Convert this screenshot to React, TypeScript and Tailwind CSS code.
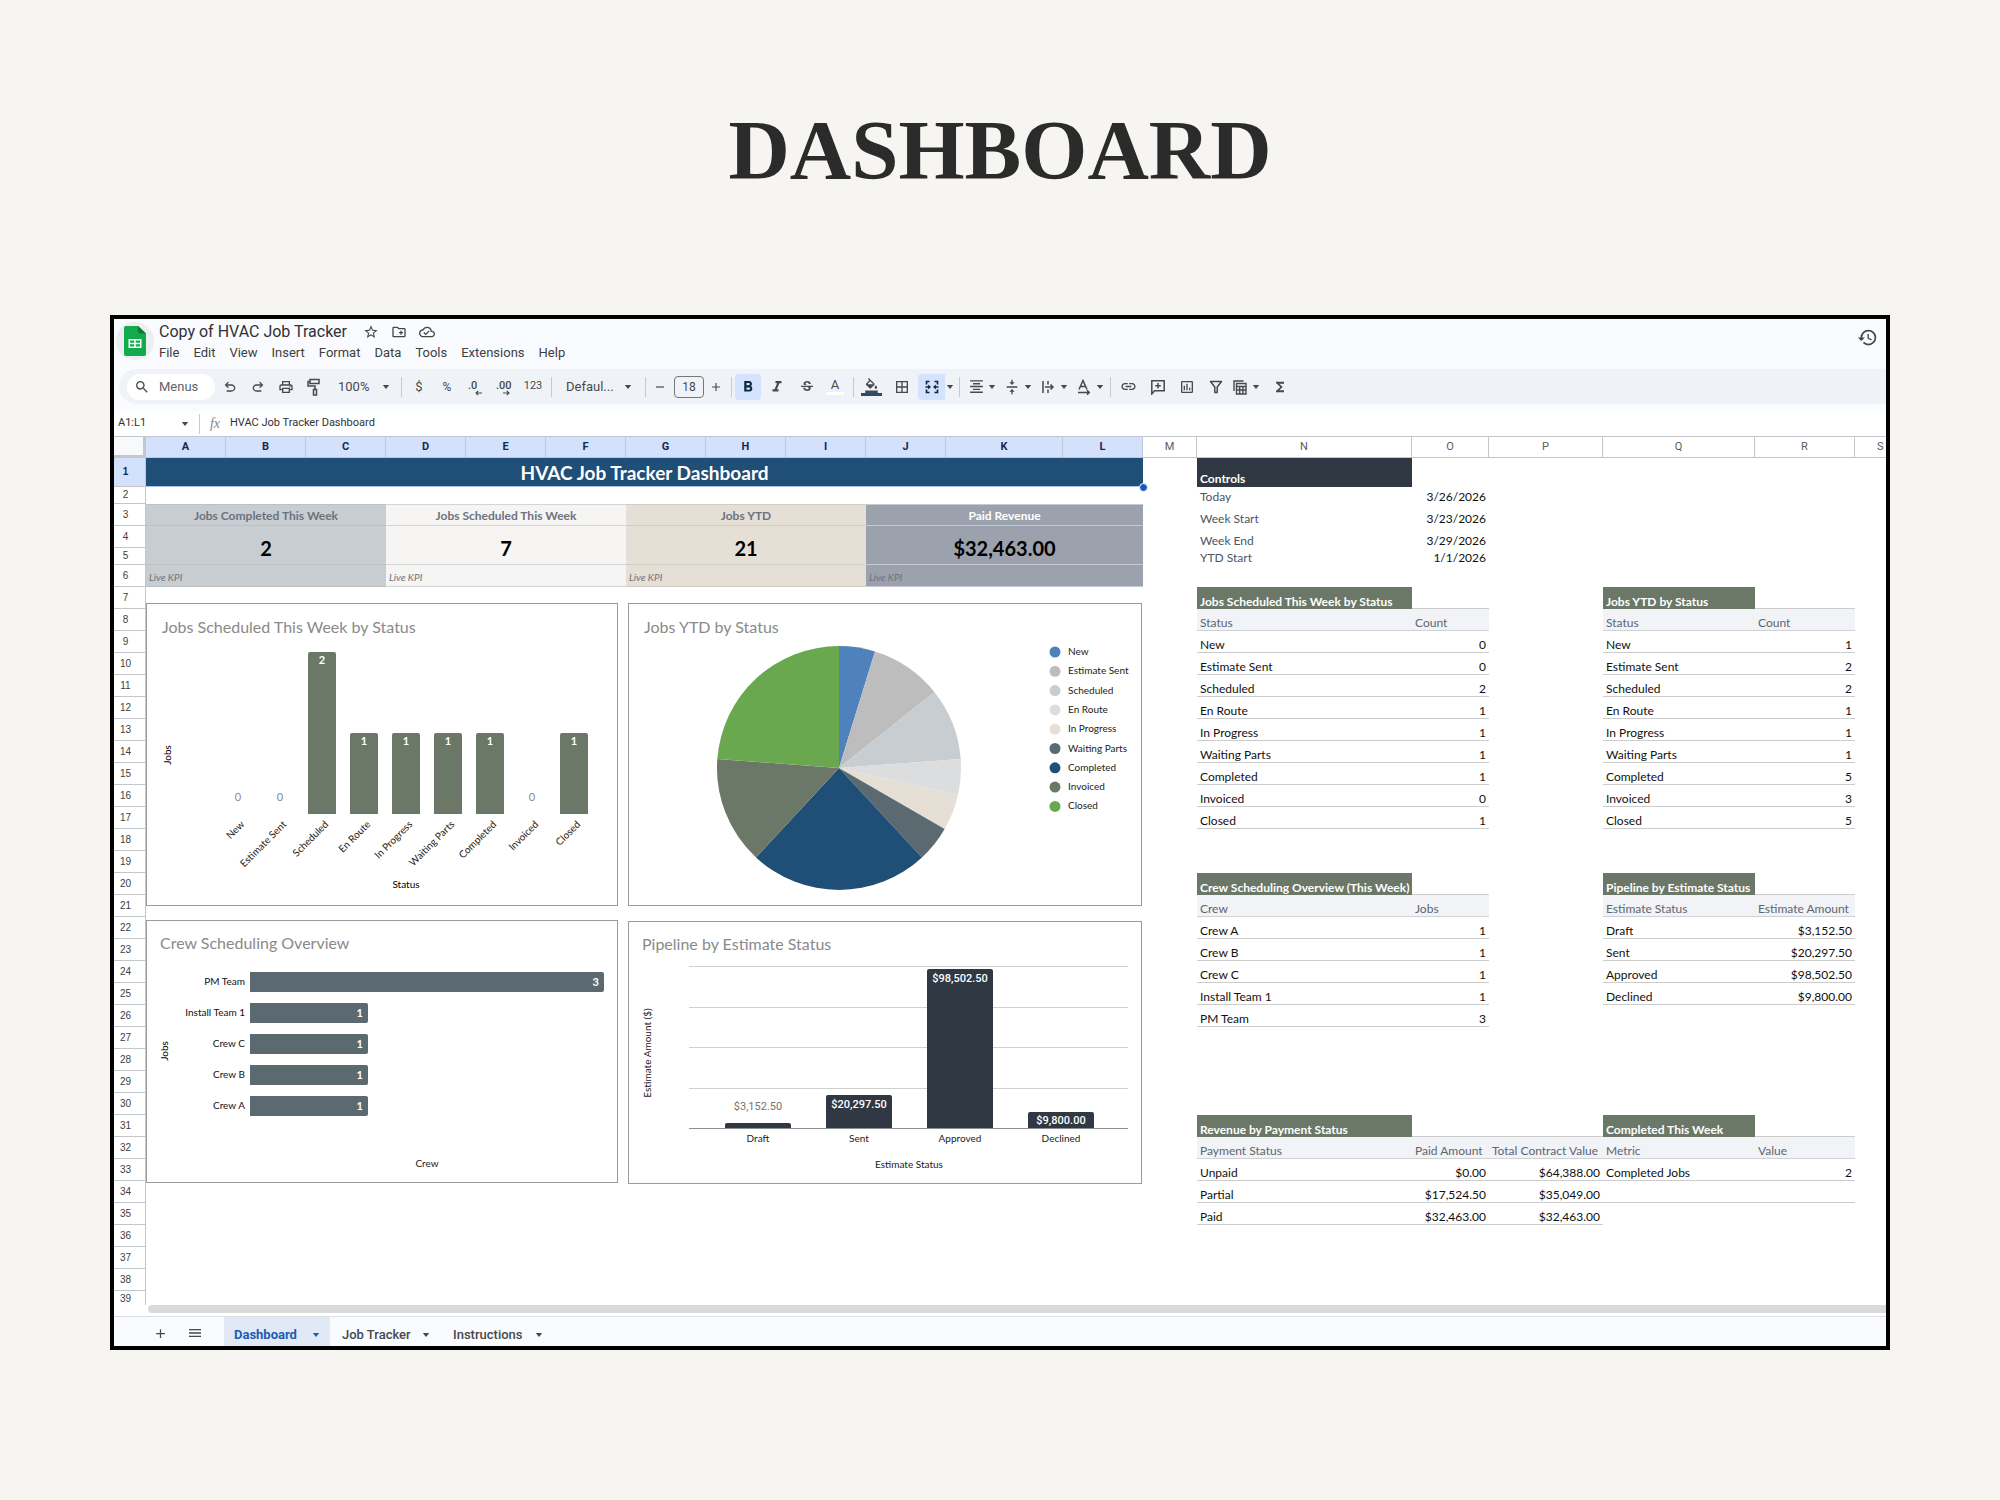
import React from "react";
import {
  MdAdd,
  MdRemove,
  MdBorderAll,
  MdFormatAlignCenter,
  MdFormatBold,
  MdFormatItalic,
  MdFunctions,
  MdHistory,
  MdLink,
  MdMenu,
  MdOutlineCloudDone,
  MdOutlineCreateNewFolder,
  MdOutlineInsertChart,
  MdOutlinePrint,
  MdSearch,
  MdStarBorder,
  MdStrikethroughS,
  MdVerticalAlignCenter,
  MdFormatColorFill,
} from "react-icons/md";

/* ---------- toolbar ---------- */

function Divider({ className = "" }: { className?: string }) {
  return <span className={`h-5 w-px shrink-0 bg-[#c7c9cc] ${className}`} />;
}

function Tool({
  label,
  className = "w-7",
  children,
}: {
  label: string;
  className?: string;
  children: React.ReactNode;
}) {
  return (
    <button
      type="button"
      aria-label={label}
      className={`flex h-[26px] shrink-0 items-center justify-center ${className}`}
    >
      {children}
    </button>
  );
}

function PairTool({ label, children }: { label: string; children: React.ReactNode }) {
  return (
    <button type="button" aria-label={label} className="flex h-[26px] shrink-0 items-center">
      <span className="flex w-5 justify-center">{children}</span>
      <Caret />
    </button>
  );
}

function Caret() {
  return (
    <svg viewBox="0 0 12 12" className="size-3 shrink-0" aria-hidden="true">
      <path d="M2.8 4h6.4L6 8z" fill="currentColor" />
    </svg>
  );
}

function UndoIcon({ className = "" }: { className?: string }) {
  return (
    <svg viewBox="0 -960 960 960" className={`size-4 ${className}`} fill="currentColor" aria-hidden="true">
      <path d="M280-200v-80h284q63 0 109.500-40T720-420q0-60-46.500-100T564-560H312l104 104-56 56-200-200 200-200 56 56-104 104h252q97 0 169.500 63T800-420q0 94-72.500 157T564-200H280Z" />
    </svg>
  );
}

function PaintIcon() {
  return (
    <svg viewBox="0 0 16 18" className="h-[18px] w-4" fill="none" stroke="currentColor" strokeWidth="1.500" aria-hidden="true">
      <path d="M4 1.500h9v4H4zM4 3.500H2v4.500h7V11M7.500 11.500h3V17h-3z" />
    </svg>
  );
}

function DecimalIcon({ more = false }: { more?: boolean }) {
  return (
    <svg viewBox="0 0 22 20" className="h-5 w-[22px]" aria-hidden="true">
      <text x="4" y="12" fontSize="11" fontWeight="500" fontFamily="Roboto, sans-serif" fill="currentColor">
        {more ? ".00" : ".0"}
      </text>
      {more ? (
        <path d="M11 16h6M14.800 13.800l2.200 2.200-2.200 2.200" fill="none" stroke="currentColor" strokeWidth="1.200" />
      ) : (
        <path d="M18 16h-6M14.200 13.800L12 16l2.200 2.200" fill="none" stroke="currentColor" strokeWidth="1.200" />
      )}
    </svg>
  );
}

function MergeIcon() {
  return (
    <svg viewBox="0 0 16 16" className="size-4" aria-hidden="true">
      <path d="M5.500 2.500H2.500v3M5.500 13.500H2.500v-3M10.500 2.500h3v3M10.500 13.500h3v-3M1.500 8H5M14.500 8H11" fill="none" stroke="currentColor" strokeWidth="1.600" />
      <path d="M4.200 5.500L7 8l-2.800 2.500zM11.800 5.500L9 8l2.800 2.500z" fill="currentColor" />
    </svg>
  );
}

function CommentIcon() {
  return (
    <svg viewBox="0 0 16 16" className="size-4" fill="none" stroke="currentColor" strokeWidth="1.500" aria-hidden="true">
      <path d="M1.800 15V1.800h12.400v10H4.500zM8 4v5.600M5.200 6.800h5.600" />
    </svg>
  );
}

function FilterIcon() {
  return (
    <svg viewBox="0 0 16 16" className="size-4" fill="none" stroke="currentColor" strokeWidth="1.500" strokeLinejoin="round" aria-hidden="true">
      <path d="M2.500 2.500h11L9.200 8v5.500H6.800V8z" />
    </svg>
  );
}

function WrapIcon() {
  return (
    <svg viewBox="0 0 16 16" className="size-4" fill="none" stroke="currentColor" strokeWidth="1.500" aria-hidden="true">
      <path d="M3 2v12M8 2v3.500M8 10.500V14M5 8h8M10.500 5.500L13 8l-2.500 2.500" />
    </svg>
  );
}

function RotateTextIcon() {
  return (
    <svg viewBox="0 0 16 16" className="size-4" fill="none" stroke="currentColor" strokeWidth="1.500" aria-hidden="true">
      <path d="M3 10.500L7 1.500l4 9M4.300 7.500h5.400M2 13.500h11M11 11.300l2.200 2.200L11 15.700" />
    </svg>
  );
}

function TableViewIcon() {
  return (
    <svg viewBox="0 0 16 16" className="size-4" fill="none" stroke="currentColor" strokeWidth="1.400" aria-hidden="true">
      <path d="M2 12V2h9.500M4.500 4.500H14V15H4.500zM4.500 7.500H14M4.500 11H14M7.700 7.500V15M10.900 7.500V15" />
    </svg>
  );
}

function SheetsLogo() {
  return (
    <span className="flex size-[38px] items-center justify-center rounded-full bg-[#eceef1]">
      <svg viewBox="0 0 22 30" className="h-[30px] w-[22px]" aria-label="Sheets">
        <path d="M2 0h12l8 7.500V28a2 2 0 0 1-2 2H2a2 2 0 0 1-2-2V2a2 2 0 0 1 2-2z" fill="#12ab4b" />
        <path d="M14 0l8 7.500h-6a2 2 0 0 1-2-2z" fill="#0b7a37" />
        <path d="M4.500 13h13v9h-13zM6 14.500v2.200h4.200v-2.200zM11.700 14.500v2.200H16v-2.200zM6 18.300v2.200h4.200v-2.200zM11.700 18.300v2.200H16v-2.200z" fill="#fff" fillRule="evenodd" />
      </svg>
    </span>
  );
}

const menus = ["File", "Edit", "View", "Insert", "Format", "Data", "Tools", "Extensions", "Help"];

function TopBar() {
  return (
    <header className="flex h-[50px] items-start justify-between pr-2">
      <div className="flex">
        <div className="pl-[2px] pt-[3px]">
          <SheetsLogo />
        </div>
        <div className="pl-[5px] pt-[3px]">
          <div className="flex h-5 items-center text-[#444746]">
            <h2 className="pr-4 text-[16px] leading-5 text-[#303236]">Copy of HVAC Job Tracker</h2>
            <div className="flex items-center gap-3">
              <button type="button" aria-label="Star"><MdStarBorder className="size-4" /></button>
              <button type="button" aria-label="Move"><MdOutlineCreateNewFolder className="size-4" /></button>
              <button type="button" aria-label="Saved to Drive"><MdOutlineCloudDone className="size-4" /></button>
            </div>
          </div>
          <nav className="flex gap-[14px] text-[13px] leading-[22px] text-[#3c3f43]">
            {menus.map((m) => (
              <button key={m} type="button">{m}</button>
            ))}
          </nav>
        </div>
      </div>
      <button type="button" aria-label="Version history" className="pt-2 text-[#444746]">
        <MdHistory className="size-[21px]" />
      </button>
    </header>
  );
}

function Toolbar() {
  return (
    <div className="pb-[7px] pl-[5px]">
      <div className="flex h-[35px] items-center rounded-l-[18px] bg-[#eff3f8] pl-2 text-[#46494d]">
        <label className="flex h-[26px] w-[88px] shrink-0 items-center rounded-full bg-white pl-[7px]">
          <MdSearch className="size-4 shrink-0" />
          <input aria-label="Menus" placeholder="Menus" className="w-14 bg-transparent pl-[9px] text-[13px] outline-none placeholder:text-[#5f6368]" />
        </label>
        <div className="ml-px flex">
          <Tool label="Undo"><UndoIcon /></Tool>
          <Tool label="Redo"><UndoIcon className="-scale-x-100" /></Tool>
          <Tool label="Print"><MdOutlinePrint className="size-4" /></Tool>
          <Tool label="Paint format"><PaintIcon /></Tool>
        </div>
        <label className="flex w-[66px] shrink-0 items-center pl-[10px] text-[13px]">
          <select aria-label="Zoom" className="w-[42px] appearance-none bg-transparent outline-none">
            <option>100%</option>
          </select>
          <Caret />
        </label>
        <Divider className="ml-[7px] mr-[3px]" />
        <Tool label="Format as currency"><span className="text-[13px]">$</span></Tool>
        <Tool label="Format as percent"><span className="text-[12px]">%</span></Tool>
        <Tool label="Decrease decimal places"><DecimalIcon /></Tool>
        <Tool label="Increase decimal places"><DecimalIcon more /></Tool>
        <Tool label="More formats" className="ml-[2px] w-7"><span className="text-[11px]">123</span></Tool>
        <Divider className="ml-1" />
        <label className="flex w-[86px] shrink-0 items-center pl-[14px] text-[13px]">
          <select aria-label="Font" className="w-[56px] appearance-none bg-transparent outline-none">
            <option>Defaul...</option>
          </select>
          <Caret />
        </label>
        <Divider className="ml-[7px]" />
        <Tool label="Decrease font size"><MdRemove className="size-[14px]" /></Tool>
        <input aria-label="Font size" defaultValue="18" className="h-[22px] w-[30px] shrink-0 rounded-[4px] border border-[#747775] bg-transparent text-center text-[12px]" />
        <Tool label="Increase font size" className="w-6"><MdAdd className="size-[14px]" /></Tool>
        <Divider className="mx-[3px]" />
        <Tool label="Bold" className="w-[26px] rounded-[4px] bg-[#d3e3fd] text-[#0b2545]"><MdFormatBold className="size-[18px]" /></Tool>
        <Tool label="Italic" className="w-8"><MdFormatItalic className="size-[18px]" /></Tool>
        <Tool label="Strikethrough"><MdStrikethroughS className="size-4" /></Tool>
        <Tool label="Text color">
          <span className="flex flex-col items-center">
            <span className="text-[13px] leading-[14px]">A</span>
            <span className="h-[3px] w-[18px] bg-white" />
          </span>
        </Tool>
        <Divider className="ml-[4px]" />
        <Tool label="Fill color" className="w-[34px]">
          <span className="flex flex-col items-center">
            <MdFormatColorFill className="size-[15px]" />
            <span className="h-[3px] w-[21px] bg-[#1f4e79]" />
          </span>
        </Tool>
        <Tool label="Borders"><MdBorderAll className="size-4" /></Tool>
        <Tool label="Merge cells" className="ml-[2px] w-[27px] rounded-l-[4px] bg-[#d3e3fd] text-[#0b2545]"><MergeIcon /></Tool>
        <Tool label="Merge type" className="w-[10px]"><Caret /></Tool>
        <Divider className="ml-1 mr-[6px]" />
        <div className="flex gap-1">
          <PairTool label="Horizontal align"><MdFormatAlignCenter className="size-[17px]" /></PairTool>
          <PairTool label="Vertical align"><MdVerticalAlignCenter className="size-4" /></PairTool>
          <PairTool label="Text wrapping"><WrapIcon /></PairTool>
          <PairTool label="Text rotation"><RotateTextIcon /></PairTool>
        </div>
        <Divider className="ml-1 mr-[3px]" />
        <Tool label="Insert link" className="w-[29px]"><MdLink className="size-[17px]" /></Tool>
        <Tool label="Insert comment" className="w-[29px]"><CommentIcon /></Tool>
        <Tool label="Insert chart" className="w-[29px]"><MdOutlineInsertChart className="size-4" /></Tool>
        <Tool label="Create a filter" className="w-[29px]"><FilterIcon /></Tool>
        <PairTool label="Filter views"><TableViewIcon /></PairTool>
        <Tool label="Functions" className="ml-1 w-7"><MdFunctions className="size-4" /></Tool>
      </div>
    </div>
  );
}

function FormulaBar() {
  return (
    <div className="flex h-[25px] items-center bg-white text-[11px] text-[#303236]">
      <input aria-label="Name box" defaultValue="A1:L1" className="w-[65px] shrink-0 pl-1 outline-none" />
      <button type="button" aria-label="Named ranges" className="text-[#46494d]"><Caret /></button>
      <Divider className="ml-2" />
      <label htmlFor="formula" className="w-[30px] shrink-0 text-center font-['Liberation_Serif',serif] text-[14px] italic text-[#80868b]">fx</label>
      <input id="formula" defaultValue="HVAC Job Tracker Dashboard" className="min-w-0 flex-1 outline-none" />
    </div>
  );
}

/* ---------- charts ---------- */

function ChartFrame({ label, w, h, className, children }: { label: string; w: number; h: number; className: string; children: React.ReactNode }) {
  return (
    <figure className={`border border-[#9b9b9b] bg-white ${className}`}>
      <svg viewBox={`1 1 ${w - 2} ${h - 2}`} className="block h-full w-full font-[Lato,sans-serif]" role="img" aria-label={label}>
        {children}
      </svg>
    </figure>
  );
}

const weekJobs: [string, number][] = [
  ["New", 0],
  ["Estimate Sent", 0],
  ["Scheduled", 2],
  ["En Route", 1],
  ["In Progress", 1],
  ["Waiting Parts", 1],
  ["Completed", 1],
  ["Invoiced", 0],
  ["Closed", 1],
];

function WeekChart() {
  return (
    <ChartFrame label="Jobs Scheduled This Week by Status" w={472} h={303} className="h-[303px] w-[472px]">
      <text x="16" y="30" fontSize="16" fill="#8a8a8a">Jobs Scheduled This Week by Status</text>
      {weekJobs.map(([name, n], i) => {
        const cx = 92 + 42 * i;
        const top = 211 - 81 * n;
        return (
          <g key={name}>
            {n > 0 && <path d={`M${cx - 14} 211V${top + 2}q0-2 2-2h24q2 0 2 2V211z`} fill="#6b7767" />}
            <text x={cx} y={n > 0 ? top + 12 : 198} fontSize="11" fontWeight={n > 0 ? 700 : 400} textAnchor="middle" fill={n > 0 ? "#fff" : "#8a8a8a"}>{n}</text>
            <text transform={`translate(${cx + 7} 222) rotate(-45)`} fontSize="10" textAnchor="end" fill="#222">{name}</text>
          </g>
        );
      })}
      <text x="260" y="285" fontSize="10" textAnchor="middle" fill="#000">Status</text>
      <text transform="translate(25 152) rotate(-90)" fontSize="10" textAnchor="middle" fill="#000">Jobs</text>
    </ChartFrame>
  );
}

const ytd: [string, number, string][] = [
  ["New", 1, "#4f81bd"],
  ["Estimate Sent", 2, "#bdbdbd"],
  ["Scheduled", 2, "#c8cdd1"],
  ["En Route", 1, "#dcdddf"],
  ["In Progress", 1, "#e6dfd6"],
  ["Waiting Parts", 1, "#5b6a70"],
  ["Completed", 5, "#1f4e77"],
  ["Invoiced", 3, "#6b7767"],
  ["Closed", 5, "#6aa84f"],
];

function PieChart() {
  const cx = 211;
  const cy = 165;
  const r = 122;
  const at = (k: number) => {
    const a = (k / 21) * 2 * Math.PI;
    return `${(cx + r * Math.sin(a)).toFixed(2)} ${(cy - r * Math.cos(a)).toFixed(2)}`;
  };
  let sum = 0;
  return (
    <ChartFrame label="Jobs YTD by Status" w={514} h={303} className="h-[303px] w-[514px]">
      <text x="16" y="30" fontSize="16" fill="#8a8a8a">Jobs YTD by Status</text>
      {ytd.map(([name, n, color], i) => {
        const from = sum;
        sum += n;
        return (
          <g key={name}>
            <path d={`M${cx} ${cy}L${at(from)}A${r} ${r} 0 0 1 ${at(sum)}z`} fill={color} />
            <circle cx="427" cy={49 + i * 19.3} r="5.500" fill={color} />
            <text x="440" y={52 + i * 19.3} fontSize="10" fill="#222">{name}</text>
          </g>
        );
      })}
    </ChartFrame>
  );
}

const crews: [string, number][] = [
  ["PM Team", 3],
  ["Install Team 1", 1],
  ["Crew C", 1],
  ["Crew B", 1],
  ["Crew A", 1],
];

function CrewChart() {
  return (
    <ChartFrame label="Crew Scheduling Overview" w={472} h={263} className="h-[263px] w-[472px]">
      <text x="14" y="29" fontSize="16" fill="#8a8a8a">Crew Scheduling Overview</text>
      {crews.map(([name, n], i) => {
        const y = 52 + 31 * i;
        const w = n * 118;
        return (
          <g key={name}>
            <path d={`M104 ${y}h${w - 2}q2 0 2 2v16q0 2-2 2H104z`} fill="#5b6a70" />
            <text x="99" y={y + 13} fontSize="10" textAnchor="end" fill="#111">{name}</text>
            <text x={104 + w - 5} y={y + 14} fontSize="11" fontWeight="700" textAnchor="end" fill="#fff">{n}</text>
          </g>
        );
      })}
      <text x="281" y="247" fontSize="10" textAnchor="middle" fill="#222">Crew</text>
      <text transform="translate(22 131) rotate(-90)" fontSize="10" textAnchor="middle" fill="#000">Jobs</text>
    </ChartFrame>
  );
}

const pipeline: [string, string, number, number][] = [
  ["Draft", "$3,152.50", 202, 189],
  ["Sent", "$20,297.50", 174, 187],
  ["Approved", "$98,502.50", 48, 61],
  ["Declined", "$9,800.00", 191, 203],
];

function PipelineChart() {
  return (
    <ChartFrame label="Pipeline by Estimate Status" w={514} h={263} className="h-[263px] w-[514px]">
      <text x="14" y="29" fontSize="16" fill="#8a8a8a">Pipeline by Estimate Status</text>
      {[45, 86, 126, 167].map((y) => (
        <path key={y} d={`M61 ${y}.5H500`} stroke="#cfcfcf" />
      ))}
      {pipeline.map(([name, value, top, ty], i) => {
        const x = 97 + 101 * i;
        return (
          <g key={name}>
            <path d={`M${x} 207V${top + 2}q0-2 2-2h62q2 0 2 2V207z`} fill="#303943" />
            <text x={x + 33} y={ty} fontSize="11" textAnchor="middle" fontFamily="Roboto, sans-serif" fontWeight={i ? 500 : 400} fill={i ? "#fff" : "#757575"}>{value}</text>
            <text x={x + 33} y="221" fontSize="10" textAnchor="middle" fill="#222">{name}</text>
          </g>
        );
      })}
      <path d="M61 207.500H500" stroke="#8f8f8f" strokeWidth="1" />
      <text x="281" y="247" fontSize="10" textAnchor="middle" fill="#222">Estimate Status</text>
      <text transform="translate(23 132) rotate(-90)" fontSize="10" textAnchor="middle" fill="#222">Estimate Amount ($)</text>
    </ChartFrame>
  );
}

/* ---------- sheet ---------- */

type Kind = "title" | "dark" | "head" | "text" | "num" | "ctl" | "date" | "line";
type Cell = [Kind, string?];
type Col = "N" | "O" | "P" | "Q" | "R";

const kindClass: Record<Kind, string> = {
  title: "bg-[#6b7767] font-bold text-white",
  dark: "bg-[#303943] pb-px font-bold text-white",
  head: "border-b border-[#cfd1d4] bg-[#f1f3f6] text-[#5d6572]",
  text: "border-b border-[#cccccc] text-[#111111]",
  num: "border-b border-[#cccccc] text-right text-[#111111]",
  ctl: "text-[#4b5563]",
  date: "text-right text-[#111111]",
  line: "border-b border-[#cccccc]",
};

const grid: Record<number, Partial<Record<Col, Cell>>> = {
  1: { N: ["dark", "Controls"] },
  2: { N: ["ctl", "Today"], O: ["date", "3/26/2026"] },
  3: { N: ["ctl", "Week Start"], O: ["date", "3/23/2026"] },
  4: { N: ["ctl", "Week End"], O: ["date", "3/29/2026"] },
  5: { N: ["ctl", "YTD Start"], O: ["date", "1/1/2026"] },
  7: { N: ["title", "Jobs Scheduled This Week by Status"], O: ["line"], Q: ["title", "Jobs YTD by Status"], R: ["line"] },
  8: { N: ["head", "Status"], O: ["head", "Count"], Q: ["head", "Status"], R: ["head", "Count"] },
  20: { N: ["title", "Crew Scheduling Overview (This Week)"], O: ["line"], Q: ["title", "Pipeline by Estimate Status"], R: ["line"] },
  21: { N: ["head", "Crew"], O: ["head", "Jobs"], Q: ["head", "Estimate Status"], R: ["head", "Estimate Amount"] },
  22: { N: ["text", "Crew A"], O: ["num", "1"], Q: ["text", "Draft"], R: ["num", "$3,152.50"] },
  23: { N: ["text", "Crew B"], O: ["num", "1"], Q: ["text", "Sent"], R: ["num", "$20,297.50"] },
  24: { N: ["text", "Crew C"], O: ["num", "1"], Q: ["text", "Approved"], R: ["num", "$98,502.50"] },
  25: { N: ["text", "Install Team 1"], O: ["num", "1"], Q: ["text", "Declined"], R: ["num", "$9,800.00"] },
  26: { N: ["text", "PM Team"], O: ["num", "3"] },
  31: { N: ["title", "Revenue by Payment Status"], O: ["line"], P: ["line"], Q: ["title", "Completed This Week"], R: ["line"] },
  32: { N: ["head", "Payment Status"], O: ["head", "Paid Amount"], P: ["head", "Total Contract Value"], Q: ["head", "Metric"], R: ["head", "Value"] },
  33: { N: ["text", "Unpaid"], O: ["num", "$0.00"], P: ["num", "$64,388.00"], Q: ["text", "Completed Jobs"], R: ["num", "2"] },
  34: { N: ["text", "Partial"], O: ["num", "$17,524.50"], P: ["num", "$35,049.00"], Q: ["line"], R: ["line"] },
  35: { N: ["text", "Paid"], O: ["num", "$32,463.00"], P: ["num", "$32,463.00"] },
};
weekJobs.forEach(([name, n], i) => {
  grid[9 + i] = { N: ["text", name], O: ["num", String(n)], Q: ["text", name], R: ["num", String(ytd[i][1])] };
});

const rightCols: Col[] = ["N", "O", "P", "Q", "R"];

function RightCells({ row }: { row: number }) {
  return (
    <>
      <td />
      {rightCols.map((c) => {
        const cell = grid[row]?.[c];
        return cell ? (
          <td key={c} className={`whitespace-nowrap px-[3px] align-bottom text-[12px] leading-[14px] ${kindClass[cell[0]]}`}>
            {cell[1]}
          </td>
        ) : (
          <td key={c} />
        );
      })}
      <td />
    </>
  );
}

const kpis = [
  { label: "Jobs Completed This Week", value: "2", bg: "bg-[#c8cdd1]", tone: "text-[#6b7280]", line: "border-[#bcc1c6]" },
  { label: "Jobs Scheduled This Week", value: "7", bg: "bg-[#f6f5f3]", tone: "text-[#6b7280]", line: "border-[#d3d4d6]" },
  { label: "Jobs YTD", value: "21", bg: "bg-[#e6dfd6]", tone: "text-[#6b7280]", line: "border-[#d0cdc9]" },
  { label: "Paid Revenue", value: "$32,463.00", bg: "bg-[#9ca1ae]", tone: "text-white", line: "border-[#c6c9d0]" },
];

function LeftCells({ row }: { row: number }) {
  if (row === 1)
    return (
      <td colSpan={12} className="relative border-b border-[#a9c3ee] bg-[#1f4e77] pt-[2px] text-center text-[19px] font-bold leading-6 text-white">
        HVAC Job Tracker Dashboard
        <span className="absolute -bottom-[6px] -right-[5px] size-[9px] rounded-full border border-white bg-[#1a56c4]" />
      </td>
    );
  if (row === 2) return <td colSpan={12} />;
  if (row === 3)
    return (
      <>
        {kpis.map((k) => (
          <td key={k.label} colSpan={3} className={`border-b border-t pt-[2px] text-center text-[12px] font-bold leading-[14px] ${k.bg} ${k.tone} ${k.line}`}>{k.label}</td>
        ))}
      </>
    );
  if (row === 4)
    return (
      <>
        {kpis.map((k) => (
          <td key={k.label} colSpan={3} rowSpan={2} className={`border-b pt-[5px] text-center text-[20px] font-bold leading-6 text-black ${k.bg} ${k.line}`}>{k.value}</td>
        ))}
      </>
    );
  if (row === 6)
    return (
      <>
        {kpis.map((k) => (
          <td key={k.label} colSpan={3} className={`border-b px-[3px] pt-[2px] text-[10px] italic leading-[14px] text-[#6b7280] ${k.bg} ${k.line}`}>Live KPI</td>
        ))}
      </>
    );
  if (row === 7)
    return (
      <td rowSpan={33} colSpan={12} className="pt-4 align-top">
        <div className="flex gap-[10px]">
          <div className="flex flex-col gap-[14px]">
            <WeekChart />
            <CrewChart />
          </div>
          <div className="flex flex-col gap-[15px]">
            <PieChart />
            <PipelineChart />
          </div>
        </div>
      </td>
    );
  return null;
}

const columns: [string, string][] = [
  ["A", "w-20"],
  ["B", "w-20"],
  ["C", "w-20"],
  ["D", "w-20"],
  ["E", "w-20"],
  ["F", "w-20"],
  ["G", "w-20"],
  ["H", "w-20"],
  ["I", "w-20"],
  ["J", "w-20"],
  ["K", "w-[117px]"],
  ["L", "w-20"],
  ["M", "w-[54px]"],
  ["N", "w-[215px]"],
  ["O", "w-[77px]"],
  ["P", "w-[114px]"],
  ["Q", "w-[152px]"],
  ["R", "w-[100px]"],
];

function rowHeight(row: number) {
  if (row === 1) return "h-[29px]";
  if (row === 2 || row === 5) return "h-[17px]";
  if (row === 39) return "h-[14px]";
  return "h-[22px]";
}

function Sheet() {
  return (
    <table className="w-full table-fixed border-separate border-spacing-0 bg-white font-[Lato,sans-serif]">
      <colgroup>
        <col className="w-8" />
        {columns.map(([name, w]) => (
          <col key={name} className={w} />
        ))}
        <col />
      </colgroup>
      <thead className="font-[Roboto,sans-serif] text-[11px] leading-[14px]">
        <tr className="h-[22px]">
          <th aria-label="Select all" className="border-b-[3px] border-r-[3px] border-t border-[#c4c7ca] bg-[#f8f9fa]" />
          {columns.map(([name], i) => (
            <th
              key={name}
              scope="col"
              className={
                i < 12
                  ? "border-y border-r border-[#c0c6d2] bg-[#d3e1fc] font-bold text-[#14294d]"
                  : "border-y border-r border-[#c4c7ca] font-normal text-[#575b60]"
              }
            >
              {name}
            </th>
          ))}
          <th scope="col" className="border-y border-[#c4c7ca] pl-[22px] text-left font-normal text-[#575b60]">S</th>
        </tr>
      </thead>
      <tbody>
        {Array.from({ length: 39 }, (_, i) => i + 1).map((row) => (
          <tr key={row} className={rowHeight(row)}>
            <th
              scope="row"
              className={`border-r border-[#c4c7ca] pr-2 text-center font-['Liberation_Sans',sans-serif] text-[10px] ${
                row === 39 ? "pt-[2px] leading-3" : "border-b leading-[14px]"
              } ${row === 1 ? "bg-[#d3e1fc] font-bold text-[#14294d]" : "font-normal text-[#3c3f43]"}`}
            >
              {row}
            </th>
            <LeftCells row={row} />
            <RightCells row={row} />
          </tr>
        ))}
      </tbody>
    </table>
  );
}

function TabsBar() {
  return (
    <footer>
      <div className="border-b border-[#dcdfe2] bg-white pb-[3px] pl-[34px]">
        <div className="h-2 rounded-l-full bg-[#dadada]" />
      </div>
      <div className="flex h-[29px] items-stretch pl-[32px] text-[13px] font-medium text-[#46494d]">
        <Tool label="Add sheet" className="w-7 self-end"><MdAdd className="size-[15px]" /></Tool>
        <Tool label="All sheets" className="ml-[7px] w-7 self-end"><MdMenu className="size-4" /></Tool>
        <button type="button" className="ml-[15px] flex w-[106px] items-center justify-between bg-[#e1e9f7] pl-[10px] pr-[8px] pt-[6px] font-bold text-[#1f5bb5]">
          Dashboard <Caret />
        </button>
        <button type="button" className="ml-3 flex w-[90px] items-center justify-between pt-[6px]">
          Job Tracker <Caret />
        </button>
        <button type="button" className="ml-[21px] flex w-[92px] items-center justify-between pt-[6px]">
          Instructions <Caret />
        </button>
      </div>
    </footer>
  );
}

export default function App() {
  return (
    <main className="min-h-screen bg-[#f6f5f1] px-[110px] pb-[150px]">
      <h1 className="pb-[117px] pt-[102px] text-center font-['Liberation_Serif',serif] text-[85px] font-bold leading-[96px] text-[#2b2b2b]">
        DASHBOARD
      </h1>
      <section className="overflow-hidden border-4 border-black bg-[#f9fbfe] font-[Roboto,sans-serif]">
        <TopBar />
        <Toolbar />
        <FormulaBar />
        <Sheet />
        <TabsBar />
      </section>
    </main>
  );
}
